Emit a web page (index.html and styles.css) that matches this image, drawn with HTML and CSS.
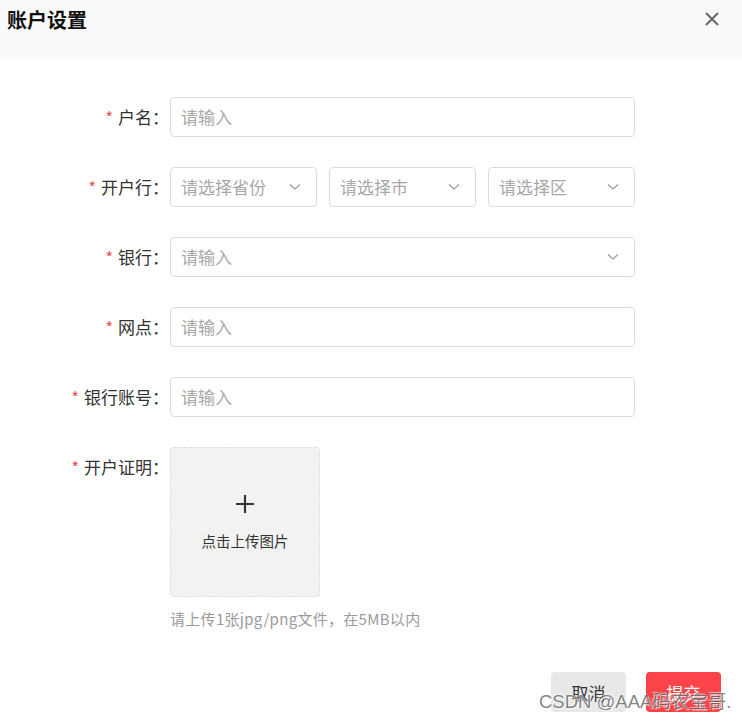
FILE: index.html
```html
<!DOCTYPE html>
<html lang="zh">
<head>
<meta charset="utf-8">
<title>账户设置</title>
<link rel="stylesheet" href="styles.css">
</head>
<body>
<div class="dialog">
  <div class="header">
    <span class="title">账户设置</span>
    <span class="close">
      <svg width="16" height="16" viewBox="0 0 16 16"><path d="M2 2 L14 14 M14 2 L2 14" stroke="#666" stroke-width="2" fill="none"/></svg>
    </span>
  </div>
  <div class="form">
    <div class="row">
      <label class="label"><span class="req">*</span>户名：</label>
      <div class="field"><div class="input wide">请输入</div></div>
    </div>
    <div class="row">
      <label class="label"><span class="req">*</span>开户行：</label>
      <div class="field selects">
        <div class="input select">请选择省份<svg class="arrow" width="12" height="8" viewBox="0 0 12 8"><path d="M1 1.5 L6 6 L11 1.5" stroke="#999" stroke-width="1.2" fill="none"/></svg></div>
        <div class="input select">请选择市<svg class="arrow" width="12" height="8" viewBox="0 0 12 8"><path d="M1 1.5 L6 6 L11 1.5" stroke="#999" stroke-width="1.2" fill="none"/></svg></div>
        <div class="input select">请选择区<svg class="arrow" width="12" height="8" viewBox="0 0 12 8"><path d="M1 1.5 L6 6 L11 1.5" stroke="#999" stroke-width="1.2" fill="none"/></svg></div>
      </div>
    </div>
    <div class="row">
      <label class="label"><span class="req">*</span>银行：</label>
      <div class="field"><div class="input wide select">请输入<svg class="arrow" width="12" height="8" viewBox="0 0 12 8"><path d="M1 1.5 L6 6 L11 1.5" stroke="#999" stroke-width="1.2" fill="none"/></svg></div></div>
    </div>
    <div class="row">
      <label class="label"><span class="req">*</span>网点：</label>
      <div class="field"><div class="input wide">请输入</div></div>
    </div>
    <div class="row">
      <label class="label"><span class="req">*</span>银行账号：</label>
      <div class="field"><div class="input wide">请输入</div></div>
    </div>
    <div class="row">
      <label class="label"><span class="req">*</span>开户证明：</label>
      <div class="field">
        <div class="upload">
          <svg class="plus" width="20" height="20" viewBox="0 0 20 20"><path d="M10 1 V19 M1 10 H19" stroke="#333" stroke-width="2.2" fill="none"/></svg>
          <span class="upload-text">点击上传图片</span>
        </div>
        <div class="hint">请上传1张jpg/png文件，在5MB以内</div>
      </div>
    </div>
  </div>
  <div class="footer">
    <button class="btn cancel">取消</button>
    <button class="btn submit">提交</button>
  </div>
  <div class="watermark">CSDN @AAA码农宝哥.</div>
</div>
</body>
</html>
```

FILE: styles.css
```css
* { box-sizing: border-box; }
html, body {
  margin: 0;
  padding: 0;
  background: #fff;
}
body {
  font-family: "Noto Sans CJK SC", "Liberation Sans", sans-serif;
  color: #333;
}
.dialog {
  position: relative;
  width: 742px;
  height: 723px;
  overflow: hidden;
}
.header {
  height: 57px;
  background: #fafafa;
  display: flex;
  align-items: flex-start;
  justify-content: space-between;
  padding: 6px 22px 0 7px;
}
.title {
  font-size: 20px;
  font-weight: bold;
  color: #111;
  line-height: 28px;
}
.close {
  display: flex;
  margin-top: 5px;
}
.form {
  padding-top: 40px;
  display: flex;
  flex-direction: column;
  gap: 30px;
}
.row {
  display: flex;
  align-items: flex-start;
}
.label {
  width: 170px;
  flex: none;
  text-align: right;
  padding-right: 1px;
  font-size: 17px;
  line-height: 40px;
  color: #333;
  white-space: nowrap;
}
.req {
  color: #f04848;
  margin-right: 5px;
  font-size: 16px;
}
.field {
  display: flex;
  flex-direction: column;
}
.selects {
  flex-direction: row;
  gap: 12px;
}
.input {
  height: 40px;
  border: 1px solid #dcdcdc;
  border-radius: 4px;
  padding: 0 11px 0 10px;
  font-size: 17px;
  line-height: 38px;
  color: #a8a8a8;
  display: flex;
  align-items: center;
  justify-content: space-between;
  background: #fff;
}
.wide { width: 465px; }
.select { width: 147px; }
.wide.select { width: 465px; }
.arrow { margin-right: 4px; }
.upload {
  width: 150px;
  height: 150px;
  background: #f2f2f2;
  border: 1px dashed #dddddd;
  border-radius: 4px;
  display: flex;
  flex-direction: column;
  align-items: center;
  padding-top: 46px;
}
.plus { margin-bottom: 17px; }
.upload-text {
  font-size: 14.5px;
  color: #333;
  line-height: 20px;
}
.hint {
  margin-top: 12px;
  font-size: 15px;
  letter-spacing: 0.3px;
  color: #9a9a9a;
  line-height: 20px;
}
.footer {
  display: flex;
  justify-content: flex-end;
  gap: 20px;
  padding: 43px 21px 0 0;
}
.btn {
  width: 75px;
  height: 40px;
  border: none;
  border-radius: 4px;
  font-family: "Noto Sans CJK SC", "Liberation Sans", sans-serif;
  font-size: 17px;
  padding: 0;
}
.cancel { background: #e8e8e8; color: #333; }
.submit { background: #fc4349; color: #fff; }
.watermark {
  position: absolute;
  left: 539px;
  top: 690px;
  font-family: "Liberation Sans", "Noto Sans CJK SC", sans-serif;
  font-size: 18.5px;
  color: rgba(90, 90, 90, 0.75);
  text-shadow: 1px 1px 1px rgba(255,255,255,0.9), -1px -1px 1px rgba(255,255,255,0.6);
  white-space: nowrap;
  line-height: 24px;
}
```
